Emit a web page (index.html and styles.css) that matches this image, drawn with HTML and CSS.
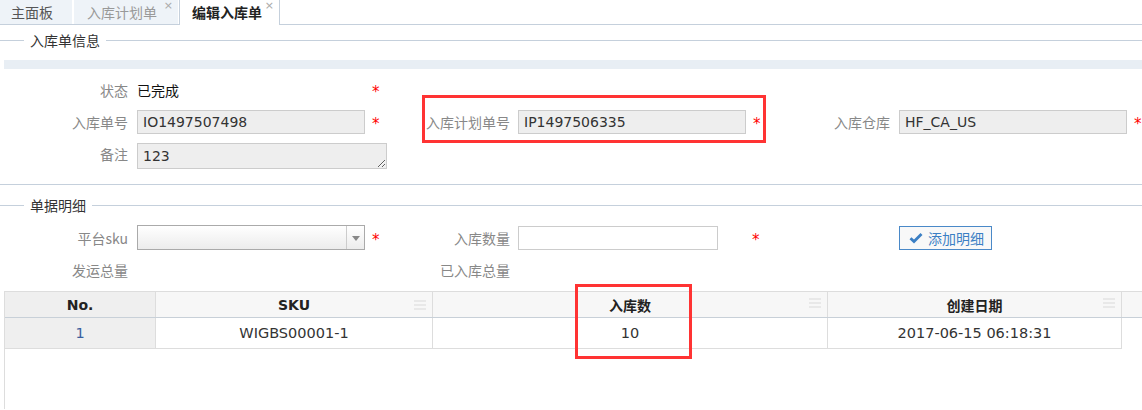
FILE: index.html
```html
<!DOCTYPE html>
<html lang="zh-CN">
  <head>
    <meta charset="UTF-8" />
    <meta name="viewport" content="width=device-width, initial-scale=1.0" />
    <link rel="stylesheet" href="styles.css">
  </head>
  <body>
    <div class="tabbar">
      <div class="tab tab-home">主面板</div>
      <div class="tab tab-plan">入库计划单<span class="close">×</span></div>
      <div class="tab tab-edit active">编辑入库单<span class="close">×</span></div>
    </div>

    <div class="legend"><span>入库单信息</span></div>
    <div class="info-bar"></div>

    <div class="form-row row-status">
      <div class="group g1">
        <label class="lbl">状态</label>
        <div class="field status-val">已完成</div>
        <span class="star">*</span>
      </div>
    </div>

    <div class="form-row row-order">
      <div class="group g1">
        <label class="lbl">入库单号</label>
        <input class="field txt" type="text" value="IO1497507498" readonly>
        <span class="star">*</span>
      </div>
      <div class="group g2">
        <label class="lbl">入库计划单号</label>
        <input class="field txt" type="text" value="IP1497506335" readonly>
        <span class="star">*</span>
      </div>
      <div class="group g3">
        <label class="lbl">入库仓库</label>
        <input class="field txt" type="text" value="HF_CA_US" readonly>
        <span class="star">*</span>
      </div>
    </div>

    <div class="form-row row-note">
      <div class="group g1">
        <label class="lbl">备注</label>
        <textarea class="field note" readonly>123</textarea>
      </div>
    </div>

    <div class="sep"></div>
    <div class="legend legend-detail"><span>单据明细</span></div>

    <div class="form-row row-sku">
      <div class="group g1">
        <label class="lbl">平台sku</label>
        <div class="field select">
          <span class="select-arrow"></span>
        </div>
        <span class="star">*</span>
      </div>
      <div class="group g2">
        <label class="lbl">入库数量</label>
        <input class="field qty" type="text" value="">
        <span class="star star-far">*</span>
      </div>
      <div class="group g3">
        <span class="lbl"></span>
        <button class="btn-add">
          <svg width="14" height="12" viewBox="0 0 14 12"><path d="M1.5 6.2 L5 9.6 L12.5 2" fill="none" stroke="#3b7fc4" stroke-width="2.8"/></svg>
          添加明细
        </button>
      </div>
    </div>

    <div class="form-row row-total">
      <div class="group g1">
        <label class="lbl">发运总量</label>
      </div>
      <div class="group g2">
        <label class="lbl">已入库总量</label>
      </div>
    </div>

    <div class="grid-wrap">
      <table class="grid">
        <tr>
          <th class="col-no">No.</th>
          <th class="col-sku"><div class="th-in">SKU<span class="menu"></span></div></th>
          <th class="col-qty"><div class="th-in">入库数<span class="menu"></span></div></th>
          <th class="col-date"><div class="th-in">创建日期<span class="menu"></span></div></th>
          <th class="col-end"></th>
        </tr>
        <tr>
          <td class="col-no num">1</td>
          <td>WIGBS00001-1</td>
          <td>10</td>
          <td>2017-06-15 06:18:31</td>
          <td class="col-end empty"></td>
        </tr>
      </table>
    </div>

    <div class="mark mark-plan"></div>
    <div class="mark mark-qty"></div>
  </body>
</html>
```

FILE: styles.css
```css
body {
  margin: 0;
  font-family: "Noto Sans CJK SC", sans-serif;
  font-size: 14px;
  color: #333;
  background-color: #fff;
  position: relative;
  height: 410px;
  overflow: hidden;
}

/* tabs */
.tabbar {
  display: flex;
  height: 24px;
  border-bottom: 1px solid #c5d0dc;
}

.tab {
  position: relative;
  height: 24px;
  line-height: 24px;
  background-color: #eef3f8;
  color: #555;
  box-sizing: border-box;
  margin-right: 2px;
}

.tab-home {
  width: 72px;
  padding-left: 11px;
}

.tab-plan {
  width: 104px;
  padding-left: 13px;
  color: #999;
  margin-right: 1px;
}

.tab-edit {
  width: 101px;
  padding-left: 12px;
}

.tab.active {
  background-color: #fff;
  color: #222;
  font-weight: bold;
  height: 25px;
  border: 1px solid #c5d0dc;
  border-bottom: none;
  border-top: none;
}

.close {
  position: absolute;
  top: 0;
  right: 5px;
  font-family: "DejaVu Sans", sans-serif;
  font-size: 11px;
  line-height: 12px;
  font-weight: normal;
  color: #aaa;
}

/* section title */
.legend {
  display: flex;
  align-items: center;
  height: 20px;
  margin-top: 5px;
  color: #333;
}

.legend::before {
  content: "";
  width: 24px;
  border-top: 1px solid #c5d0dc;
}

.legend::after {
  content: "";
  flex: 1;
  border-top: 1px solid #c5d0dc;
}

.legend span {
  padding: 0 6px;
  line-height: 20px;
}

.legend-detail {
  margin-top: 10px;
}

.info-bar {
  height: 9px;
  margin: 10px 0 0 4px;
  background-color: #e8eef4;
}

.sep {
  height: 0;
  border-top: 1px solid #c5d0dc;
  margin-top: 15px;
}

/* form rows */
.form-row {
  display: flex;
  align-items: center;
}

.group {
  display: flex;
  align-items: center;
}

.g1 {
  width: 418px;
}

.g1 .lbl {
  width: 128px;
}

.g2 {
  width: 380px;
}

.g2 .lbl {
  width: 92px;
}

.g3 .lbl {
  width: 92px;
}

.lbl {
  text-align: right;
  color: #888;
  line-height: 20px;
  flex-shrink: 0;
}

.field {
  margin-left: 9px;
  box-sizing: border-box;
}

.g2 .field {
  margin-left: 8px;
}

.star {
  color: #f00;
  font-family: "DejaVu Sans", sans-serif;
  font-size: 15px;
  margin-left: 7px;
  line-height: 20px;
  padding-top: 4px;
}

.star-far {
  margin-left: 34px;
}

.row-status {
  height: 20px;
  margin-top: 11px;
}

.status-val {
  width: 228px;
  color: #111;
  line-height: 20px;
}

.row-order {
  height: 24px;
  margin-top: 10px;
}

.txt {
  width: 228px;
  height: 24px;
  border: 1px solid #ccc;
  background-color: #eee;
  padding: 0 5px;
  font-family: "DejaVu Sans", sans-serif;
  font-size: 14px;
  color: #333;
  outline: none;
}

.row-note {
  height: 26px;
  margin-top: 9px;
  align-items: flex-start;
}

.row-note .group {
  align-items: flex-start;
}

.row-note .lbl {
  margin-top: 1px;
}

.note {
  width: 250px;
  height: 26px;
  border: 1px solid #ccc;
  background-color: #eee;
  padding: 2px 5px;
  font-family: "DejaVu Sans", sans-serif;
  font-size: 14px;
  line-height: 20px;
  color: #333;
  resize: both;
  overflow: hidden;
  outline: none;
}

.row-sku {
  height: 25px;
  margin-top: 10px;
}

.select {
  position: relative;
  width: 228px;
  height: 25px;
  border: 1px solid #aaa;
  background: linear-gradient(#fff, #ececec);
}

.select-arrow {
  position: absolute;
  top: 0;
  right: 0;
  width: 17px;
  height: 23px;
  border-left: 1px solid #ccc;
}

.select-arrow::after {
  content: "";
  position: absolute;
  top: 10px;
  left: 5px;
  border-left: 4px solid transparent;
  border-right: 4px solid transparent;
  border-top: 5px solid #888;
}

.qty {
  width: 200px;
  height: 24px;
  border: 1px solid #ccc;
  background-color: #fff;
  outline: none;
}

.btn-add {
  margin-left: 9px;
  width: 93px;
  height: 24px;
  border: 1px solid #4a89c8;
  background-color: #f8f8f8;
  color: #3b7fc4;
  font-family: "Noto Sans CJK SC", sans-serif;
  font-size: 14px;
  display: flex;
  align-items: center;
  gap: 5px;
  padding: 0 0 0 9px;
  box-sizing: border-box;
}

.row-total {
  height: 20px;
  margin-top: 10px;
}

/* grid */
.grid-wrap {
  margin: 11px 0 0 4px;
  height: 118px;
  border-left: 1px solid #ddd;
  overflow: hidden;
}

.grid {
  border-collapse: collapse;
  table-layout: fixed;
  width: 1160px;
  font-family: "DejaVu Sans", sans-serif;
  font-size: 14.5px;
}

.grid th,
.grid td {
  border: 1px solid #ddd;
  text-align: center;
  padding: 0;
}

.grid th {
  height: 25px;
  background-color: #f7f7f7;
  color: #222;
  font-family: "DejaVu Sans", "Noto Sans CJK SC", sans-serif;
  font-size: 14px;
  font-weight: bold;
  border-bottom: 1px solid #c8d0d8;
  border-top: 1px solid #ddd;
}

.grid td {
  height: 30px;
  color: #333;
}

.grid th.col-no,
.grid td.col-no {
  background-color: #efefef;
  border-left: none;
}

.col-no {
  width: 150px;
}

.col-sku {
  width: 276px;
}

.col-qty {
  width: 394px;
}

.col-date {
  width: 293px;
}

.grid td.num {
  color: #3a5f9e;
}

.grid td.empty {
  border: none;
  border-left: 1px solid #ddd;
}

.th-in {
  position: relative;
}

.menu {
  position: absolute;
  right: 6px;
  top: 3px;
  width: 12px;
  height: 10px;
  background: linear-gradient(#e8e8e8 0 2px, transparent 2px 4px, #e8e8e8 4px 6px, transparent 6px 8px, #e8e8e8 8px 10px);
}

/* annotation boxes */
.mark {
  position: absolute;
  border: 3px solid #f33;
  box-sizing: border-box;
}

.mark-plan {
  left: 422px;
  top: 95px;
  width: 344px;
  height: 48px;
}

.mark-qty {
  left: 575px;
  top: 284px;
  width: 117px;
  height: 75px;
}
```
